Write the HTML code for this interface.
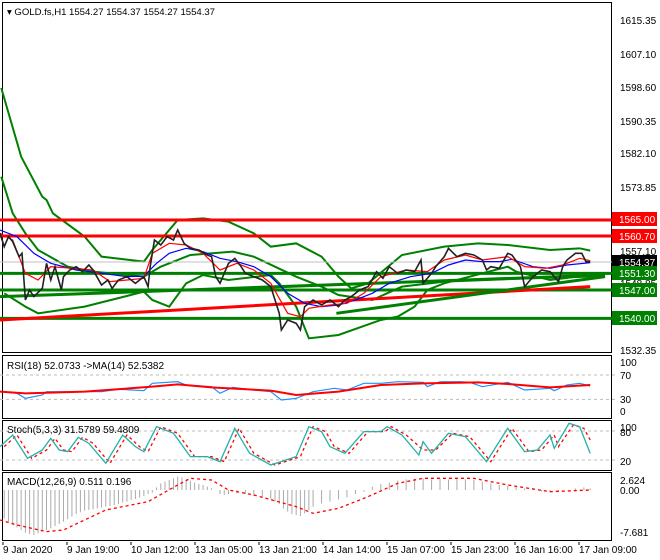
<!DOCTYPE html>
<html><head><meta charset="utf-8"><style>
body{margin:0;background:#fff;}
svg{display:block;font-family:"Liberation Sans",sans-serif;font-size:10px;}
.n{vector-effect:non-scaling-stroke;fill:none;}
</style></head><body>
<svg width="660" height="560" viewBox="0 0 660 560">
<rect width="660" height="560" fill="#fff"/>
<rect x="2.5" y="2.5" width="609" height="350" fill="none" stroke="#000"/>
<rect x="2.5" y="355.5" width="609" height="63" fill="none" stroke="#000"/>
<rect x="2.5" y="420.5" width="609" height="50" fill="none" stroke="#000"/>
<rect x="2.5" y="472.5" width="609" height="68" fill="none" stroke="#000"/>
<text x="7" y="15" font-size="9.6" textLength="208">▾ GOLD.fs,H1  1554.27 1554.37 1554.27 1554.37</text>

<g transform="translate(0,200) scale(0.4231,0.3333)">
<polyline class="n" stroke="#008000" stroke-width="2" points="3,-336 50,-130 100,-10 110,0 125,40 200,110 240,170 340,185 360,150 420,60 480,55 540,65 600,100 640,140 700,130 760,170 800,230 830,265 870,250 950,165 1050,140 1130,130 1200,135 1300,150 1370,145 1395,152"/>
<polyline class="n" stroke="#008000" stroke-width="2" points="3,-70 30,40 60,100 90,150 160,200 220,215 340,230 380,200 450,165 550,155 600,170 650,200 700,230 760,260 800,285 880,300 950,260 1050,245 1150,240 1250,235 1395,230"/>
<polyline class="n" stroke="#008000" stroke-width="2" points="10,280 60,320 90,340 200,320 340,275 360,300 400,320 440,250 480,225 540,240 640,225 660,250 700,320 730,415 800,405 900,360 940,350 980,320 1010,270 1050,250 1200,200 1220,215 1300,240 1395,225"/>
<line class="n" x1="0" y1="60" x2="1460" y2="60" stroke="#f00" stroke-width="3"/>
<line class="n" x1="0" y1="108" x2="1460" y2="108" stroke="#f00" stroke-width="3"/>
<line class="n" x1="0" y1="186" x2="1460" y2="186" stroke="#c0c0c0" stroke-width="1"/>
<line class="n" x1="0" y1="220" x2="1460" y2="220" stroke="#008000" stroke-width="3"/>
<line class="n" x1="0" y1="270" x2="1460" y2="270" stroke="#008000" stroke-width="3"/>
<line class="n" x1="0" y1="355" x2="1460" y2="355" stroke="#008000" stroke-width="3"/>
<line class="n" x1="0" y1="360" x2="1395" y2="260" stroke="#f00" stroke-width="3"/>
<line class="n" x1="0" y1="290" x2="1430" y2="225" stroke="#008000" stroke-width="3"/>
<line class="n" x1="795" y1="340" x2="1430" y2="230" stroke="#008000" stroke-width="3"/>
<polyline class="n" stroke="#00f" stroke-width="1.2" points="0,90 40,110 80,160 120,190 180,210 240,220 300,230 340,228 370,190 400,160 440,145 480,155 520,175 560,185 600,200 640,230 680,280 720,310 760,320 800,315 840,300 880,280 920,250 970,230 1020,220 1060,195 1100,180 1140,185 1180,185 1210,178 1260,200 1300,205 1340,195 1395,188"/>
<polyline class="n" stroke="#f00" stroke-width="1.2" points="0,100 30,120 60,220 90,240 120,200 170,205 220,210 260,245 300,240 340,235 360,160 400,130 440,135 480,160 520,210 560,190 600,210 640,250 680,340 710,350 730,325 780,315 820,310 860,280 900,230 960,210 1010,215 1050,180 1100,165 1140,180 1200,170 1240,200 1290,205 1330,195 1370,175 1395,182"/>
<polyline class="n" stroke="#222" stroke-width="1.6" points="0,100 10,140 20,110 30,125 45,170 52,160 60,300 70,270 80,290 100,265 110,190 120,240 130,200 145,270 150,230 165,210 180,200 195,215 210,195 220,210 240,255 255,240 265,265 280,240 300,230 320,250 340,230 350,260 355,200 365,120 380,135 395,110 410,120 420,90 435,130 450,145 470,150 490,165 500,170 510,230 520,250 530,220 540,190 555,175 570,200 580,220 600,230 620,240 640,260 660,340 665,390 680,360 700,370 710,390 720,320 740,300 760,315 780,300 800,320 815,300 830,290 850,270 870,260 890,215 905,235 920,200 940,220 960,210 980,215 995,180 1000,250 1020,220 1030,200 1050,170 1060,145 1080,170 1100,160 1120,165 1140,180 1150,210 1160,200 1180,205 1200,160 1210,165 1230,200 1240,260 1260,230 1280,210 1300,215 1320,245 1330,200 1340,180 1360,160 1375,160 1385,185 1395,185"/>
</g>
<g font-size="10" fill="#000">
<text x="620" y="24">1615.35</text>
<text x="620" y="58">1607.10</text>
<text x="620" y="91">1598.60</text>
<text x="620" y="125">1590.35</text>
<text x="620" y="157">1582.10</text>
<text x="620" y="191">1573.85</text>
<text x="620" y="255">1557.10</text>
<text x="620" y="287">1548.85</text>
<text x="620" y="354">1532.35</text>
</g>
<rect x="612" y="212" width="45" height="14" fill="#f00"/><text x="619" y="223" fill="#fff">1565.00</text>
<rect x="612" y="229" width="45" height="14" fill="#f00"/><text x="619" y="240" fill="#fff">1560.70</text>
<rect x="612" y="255" width="45" height="14" fill="#000"/><text x="619" y="266" fill="#fff">1554.37</text>
<rect x="612" y="266" width="45" height="14" fill="#008000"/><text x="619" y="277" fill="#fff">1551.30</text>
<rect x="612" y="283" width="45" height="14" fill="#008000"/><text x="619" y="294" fill="#fff">1547.00</text>
<rect x="612" y="311" width="45" height="14" fill="#008000"/><text x="619" y="322" fill="#fff">1540.00</text>

<g transform="translate(0,350) scale(0.4231,0.3333)">
<line class="n" x1="0" y1="75" x2="1455" y2="75" stroke="#bbb" stroke-dasharray="3,3"/>
<line class="n" x1="0" y1="148" x2="1455" y2="148" stroke="#bbb" stroke-dasharray="3,3"/>
<line class="n" x1="0" y1="243" x2="1455" y2="243" stroke="#bbb" stroke-dasharray="3,3"/>
<line class="n" x1="0" y1="330" x2="1455" y2="330" stroke="#bbb" stroke-dasharray="3,3"/>
<polyline class="n" stroke="#1e90ff" stroke-width="1.2" points="0,125 40,130 60,145 100,135 110,125 200,125 240,125 280,118 340,122 360,100 420,95 440,105 500,110 520,130 550,112 600,120 640,125 665,150 700,145 740,125 790,115 820,120 860,100 900,100 940,95 1000,97 1010,110 1040,95 1090,95 1110,97 1140,110 1200,97 1240,120 1300,115 1310,122 1340,105 1370,100 1395,108"/>
<polyline class="n" stroke="#f00" stroke-width="2" points="0,125 60,130 200,125 360,110 420,103 500,112 640,122 700,135 800,125 900,105 1000,100 1130,97 1200,102 1300,112 1395,105"/>
<polyline class="n" stroke="#f00" stroke-width="1.3" stroke-dasharray="3,3" points="10,290 40,255 75,325 110,300 130,265 150,300 170,305 195,262 220,280 260,340 300,255 330,290 350,305 380,230 420,250 460,320 500,320 530,335 565,235 600,310 650,345 710,320 740,230 770,245 790,290 825,310 870,245 910,245 925,230 960,255 1000,300 1030,300 1070,250 1110,260 1160,335 1210,235 1250,305 1280,300 1310,255 1320,290 1355,225 1380,235 1395,270"/>
<polyline class="n" stroke="#20b2aa" stroke-width="1.3" points="0,290 30,255 65,325 100,300 120,265 140,300 160,305 185,262 210,280 250,340 290,255 320,290 340,305 370,230 410,250 450,320 490,320 520,335 555,235 590,310 640,345 700,320 730,230 760,245 780,290 815,310 860,245 900,245 915,230 950,255 990,315 1000,275 1020,310 1060,250 1100,260 1150,335 1200,235 1240,305 1270,300 1300,255 1310,295 1345,220 1370,230 1395,310"/>
<path class="n" stroke="#aaa" stroke-width="1" d="M10,420V505M20,420V515M30,420V525M40,420V532M50,420V540M60,420V548M70,420V552M80,420V555M90,420V550M100,420V545M110,420V540M120,420V535M130,420V528M140,420V522M150,420V515M160,420V508M170,420V500M180,420V492M190,420V487M200,420V482M210,420V480M220,420V478M230,420V475M240,420V472M250,420V470M260,420V468M270,420V465M280,420V462M290,420V458M300,420V455M310,420V450M320,420V447M330,420V443M340,420V438M350,420V432M360,420V428M370,420V412M380,420V400M390,420V395M400,420V390M410,420V385M420,420V380M430,420V382M440,420V388M450,420V392M460,420V398M470,420V402M480,420V405M490,420V410M500,420V415M520,420V432M530,420V435M540,420V432M560,420V430M580,420V432M600,420V438M620,420V442M640,420V448M650,420V455M660,420V462M670,420V475M680,420V485M690,420V492M700,420V495M710,420V498M720,420V490M730,420V480M740,420V470M760,420V460M780,420V455M800,420V448M820,420V442M840,420V432M860,420V425M880,420V410M900,420V402M920,420V398M940,420V392M960,420V388M980,420V386M1000,420V385M1020,420V388M1040,420V386M1060,420V388M1080,420V386M1100,420V388M1120,420V390M1140,420V395M1160,420V400M1180,420V405M1200,420V408M1220,420V410M1240,420V415M1260,420V418M1280,420V425M1300,420V428M1320,420V426M1340,420V420M1360,420V415M1380,420V412M1395,420V415"/>
<polyline class="n" stroke="#f00" stroke-width="1.3" stroke-dasharray="3,3" points="0,510 40,525 110,545 150,540 250,480 350,455 420,405 450,385 500,390 540,420 600,435 700,470 740,490 800,475 870,440 940,400 1000,385 1120,385 1200,405 1300,425 1395,420"/>
</g>
<g font-size="10" fill="#000">
<text x="7" y="369">RSI(18) 52.0733  -&gt;MA(14) 52.5382</text>
<text x="620" y="366">100</text><text x="620" y="379">70</text><text x="620" y="403">30</text><text x="620" y="415">0</text>
<text x="7" y="433">Stoch(5,3,3) 31.5789 59.4809</text>
<text x="620" y="431">100</text><text x="620" y="436">80</text><text x="620" y="465">20</text>
<text x="7" y="485">MACD(12,26,9) 0.511 0.196</text>
<text x="620" y="484">2.624</text><text x="620" y="494">0.00</text><text x="620" y="536">-7.681</text>
<text x="3" y="553">9 Jan 2020</text>
<text x="67" y="553">9 Jan 19:00</text>
<text x="131" y="553">10 Jan 12:00</text>
<text x="195" y="553">13 Jan 05:00</text>
<text x="259" y="553">13 Jan 21:00</text>
<text x="323" y="553">14 Jan 14:00</text>
<text x="387" y="553">15 Jan 07:00</text>
<text x="451" y="553">15 Jan 23:00</text>
<text x="515" y="553">16 Jan 16:00</text>
<text x="579" y="553">17 Jan 09:00</text>
</g>
<g stroke="#000"><path d="M3,542v3M67,542v3M131,542v3M195,542v3M259,542v3M323,542v3M387,542v3M451,542v3M515,542v3M579,542v3"/></g>
</svg>
</body></html>
